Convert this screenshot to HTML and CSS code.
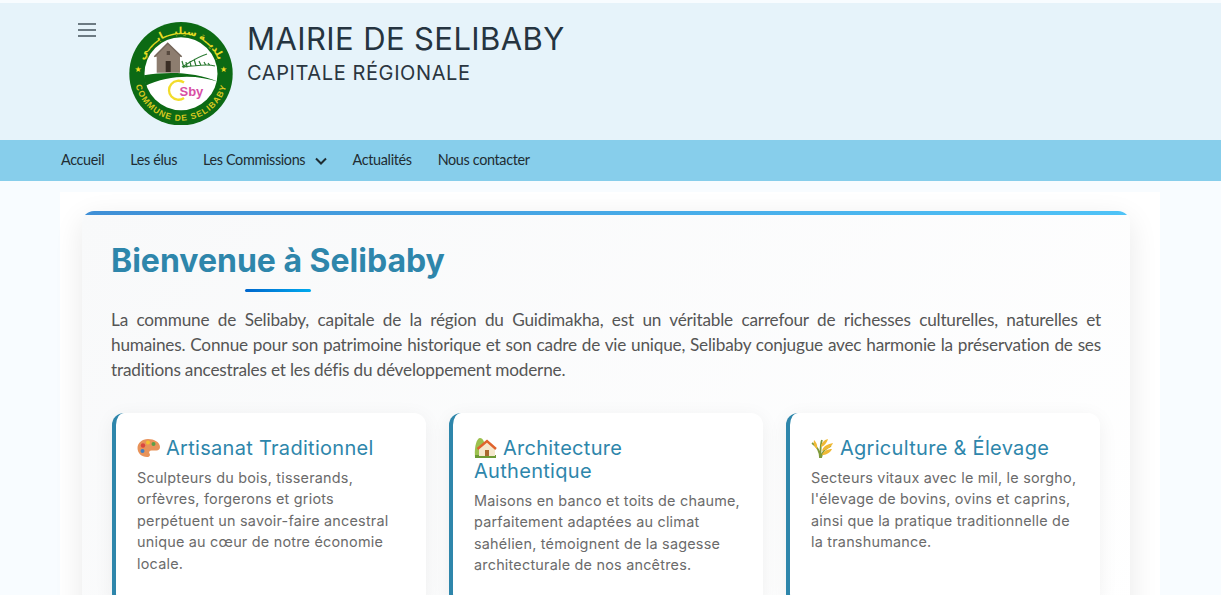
FILE: index.html
```html
<!DOCTYPE html>
<html lang="fr">
<head>
<meta charset="utf-8">
<title>Mairie de Selibaby</title>
<link rel="stylesheet" href="styles.css">
</head>
<body>
<header class="site-header">
  <button class="burger" aria-label="Menu">
    <svg width="18" height="14" viewBox="0 0 18 14"><path d="M0 1h18M0 7h18M0 13h18" stroke="#6c7a82" stroke-width="2" fill="none"/></svg>
  </button>
  <svg class="logo" viewBox="0 0 104 104" width="104" height="104">
    <defs>
      <path id="arcTop" d="M12.500 52.700A39.500 39.500 0 1 1 91.500 52.700"/>
      <path id="arcBottom" d="M5 52.700A47 47 0 0 0 99 52.700"/>
      <clipPath id="inner"><circle cx="52" cy="52.700" r="37"/></clipPath>
    </defs>
    <circle cx="52" cy="52.700" r="51.700" fill="#0c6a14"/>
    <circle cx="52" cy="52.700" r="36.500" fill="#fff"/>
    <path d="M38.700 22.300L25.300 35.700H27.700V51.700H51V35.700H52.700Z" fill="#8d7d6f"/>
    <path d="M25.300 35.700L38.700 22.300L52.700 35.700" fill="none" stroke="#75665a" stroke-width="1.500"/>
    <rect x="36.700" y="40" width="5" height="11" fill="#3a2e25"/>
    <rect x="37.700" y="30" width="3.300" height="4" fill="#574a3f"/>
    <path d="M53 46C60 42 68 36 78 33M55 45.500C64 46 76 42 86 45M53 40L55 47M57 41L58 46.500M61 40L62 45.500M65 38L67 45M70 40L72 44.500M75 41L77 44.500M79 42L81 44.500" fill="none" stroke="#2c7a33" stroke-width="1.200"/>
    <g clip-path="url(#inner)">
      <path d="M14 54.500C40 50 68 51 92 62C72 54 42 52 14 66Z" fill="#0c6a14"/>
    </g>
    <path d="M55 61.500A9.500 9.500 0 1 0 55 77" fill="none" stroke="#f2dc2c" stroke-width="2.300"/>
    <text class="logo-sby" x="50.500" y="74.500">Sby</text>
    <text class="logo-ar"><textPath href="#arcTop" startOffset="50%" text-anchor="middle">بلديــة سيلبـــابــــي</textPath></text>
    <text class="logo-fr"><textPath href="#arcBottom" startOffset="50%" text-anchor="middle">COMMUNE DE SELIBABY</textPath></text>
    <text class="logo-star" x="5.500" y="51">★</text>
    <text class="logo-star" x="91" y="51">★</text>
  </svg>
  <div class="brand">
    <h1>MAIRIE DE SELIBABY</h1>
    <p>CAPITALE RÉGIONALE</p>
  </div>
</header>
<nav class="main-nav">
  <a href="#">Accueil</a>
  <a href="#">Les élus</a>
  <a href="#" class="has-caret">Les Commissions
    <svg width="12" height="8" viewBox="0 0 12 8"><path d="M1 1.500L6 6.500L11 1.500" fill="none" stroke="#1f2d33" stroke-width="2"/></svg>
  </a>
  <a href="#">Actualités</a>
  <a href="#">Nous contacter</a>
</nav>
<main class="container">
  <section class="welcome">
    <h2>Bienvenue à Selibaby</h2>
    <p class="intro">La commune de Selibaby, capitale de la région du Guidimakha, est un véritable carrefour de richesses culturelles, naturelles et humaines. Connue pour son patrimoine historique et son cadre de vie unique, Selibaby conjugue avec harmonie la préservation de ses traditions ancestrales et les défis du développement moderne.</p>
    <div class="features">
      <article class="feature">
        <h3><svg class="emoji" viewBox="0 0 23 20"><path d="M11 1C5 1 .500 5 .500 10s4 9 9.500 9c3 0 3.500-2 2.500-3.500s0-3 2-3h5c2 0 3.500-1.500 3.500-3.500C23 4 17 1 11 1Z" fill="#e8935a"/><circle cx="6" cy="7.500" r="2.200" fill="#d9473f"/><circle cx="11" cy="4.500" r="2" fill="#f2c230"/><circle cx="16.500" cy="6" r="2" fill="#5a9f48"/><circle cx="5.500" cy="13" r="2" fill="#3f7fc4"/></svg> Artisanat Traditionnel</h3>
        <p>Sculpteurs du bois, tisserands, orfèvres, forgerons et griots perpétuent un savoir-faire ancestral unique au cœur de notre économie locale.</p>
      </article>
      <article class="feature">
        <h3><svg class="emoji" viewBox="0 0 23 20"><path d="M1 19C0 8 3 0 6 0s5 5 5 9l-2 10Z" fill="#9cc04e"/><rect x="1" y="17" width="21" height="3" fill="#6d9a35"/><path d="M5 10L13 3L21 10V18H5Z" fill="#f5e7cc"/><path d="M3.500 11L13 3L22 11" fill="none" stroke="#e0632d" stroke-width="2.400"/><rect x="11" y="12" width="4" height="6" fill="#a9682f"/></svg> Architecture Authentique</h3>
        <p>Maisons en banco et toits de chaume, parfaitement adaptées au climat sahélien, témoignent de la sagesse architecturale de nos ancêtres.</p>
      </article>
      <article class="feature">
        <h3><svg class="emoji" viewBox="0 0 23 20"><path d="M9 20C9 14 7 9 1 5M9 20C10 13 9 7 11 2M10 20C11 14 14 10 20 8" fill="none" stroke="#7f9a3a" stroke-width="1.800"/><path d="M6 11C7 7 5 4 3 2C2 6 3 9 6 11ZM10 9C14 8 16 4 17 1C13 2 10 5 10 9ZM11 13C15 12 20 10 22 5C17 6 12 8 11 13ZM11 17C15 17 19 15 21 11C17 11 12 13 11 17Z" fill="#f0b935"/></svg> Agriculture &amp; Élevage</h3>
        <p>Secteurs vitaux avec le mil, le sorgho, l'élevage de bovins, ovins et caprins, ainsi que la pratique traditionnelle de la transhumance.</p>
      </article>
    </div>
  </section>
</main>
</body>
</html>
```
FILE: styles.css
```css
* { box-sizing: border-box; }
html { overflow: hidden; }
body {
  margin: 0;
  padding-top: 3px;
  background: #f8fcff;
  color: #333;
  font-family: "Lato", "Noto Sans", sans-serif;
}
.site-header {
  display: flex;
  align-items: flex-start;
  height: 137px;
  padding: 18px 0 0 78px;
  background: #e6f3fa;
}
.burger {
  width: 18px;
  height: 14px;
  margin: 2px 33px 0 0;
  padding: 0;
  border: 0;
  background: none;
  line-height: 0;
}
.logo { flex: none; margin-right: 14px; }
.logo-ar { font: 700 10px "Noto Sans", "DejaVu Sans", sans-serif; fill: #e8dc22; }
.logo-fr { font: 700 8.500px "Liberation Sans", sans-serif; letter-spacing: 1px; fill: #d8c820; }
.logo-star { font: 8px "DejaVu Sans", sans-serif; fill: #f0dc22; }
.logo-sby { font: 700 13px "Liberation Sans", sans-serif; fill: #d84fa5; }
.brand { margin-top: -1px; }
.brand h1 {
  margin: 0;
  font: 400 31px/38px "Inter", sans-serif;
  letter-spacing: .4px;
  color: #253440;
}
.brand p {
  margin: 3px 0 0;
  font: 400 20px/24px "Inter", sans-serif;
  letter-spacing: .6px;
  color: #2b3640;
}
.main-nav {
  display: flex;
  align-items: center;
  gap: 26px;
  height: 41px;
  padding: 0 0 3px 61px;
  background: #87ceeb;
}
.main-nav a {
  font-size: 14.400px;
  letter-spacing: -.35px;
  color: #1f2d33;
  text-decoration: none;
}
.has-caret svg { margin-left: 6px; }
.container {
  width: 1100px;
  margin: 11px 0 0 60px;
  padding: 19px 30px 0 22px;
  background: #fff;
}
.welcome {
  position: relative;
  padding: 31px 29px 40px 29px;
  border-radius: 12px;
  background: linear-gradient(135deg, #f8f9fa, #fff);
  box-shadow: 0 8px 30px rgba(0, 0, 0, .09);
  overflow: hidden;
}
.welcome::before {
  content: "";
  position: absolute;
  inset: 0 0 auto 0;
  height: 4px;
  background: linear-gradient(90deg, #3f8fd6, #4fc3f7);
}
.welcome h2 {
  position: relative;
  display: inline-block;
  margin: 0 0 15px;
  padding-bottom: 12px;
  font: 700 32px/38px "Inter", sans-serif;
  color: #2e86ab;
}
.welcome h2::after {
  content: "";
  position: absolute;
  left: 134px;
  bottom: 0;
  width: 66px;
  height: 3px;
  border-radius: 2px;
  background: linear-gradient(90deg, #0066cc, #00aaee);
}
.intro {
  margin: 0 0 31px;
  font-size: 17.200px;
  letter-spacing: -.2px;
  line-height: 25px;
  text-align: justify;
  color: #555;
}
.features {
  display: grid;
  grid-template-columns: repeat(3, 314.500px);
  gap: 22.500px;
  margin-left: .5px;
}
.feature {
  padding: 23.500px 22px 30px 21.500px;
  border-left: 4px solid #2e86ab;
  border-radius: 12px;
  background: #fff;
  box-shadow: 0 4px 20px rgba(0, 0, 0, .06);
}
.feature h3 {
  margin: 0 0 7px;
  font: 400 20px/23px "Inter", sans-serif;
  letter-spacing: .3px;
  color: #2e86ab;
}
.emoji { width: 23px; height: 20px; vertical-align: -3px; }
.feature p {
  margin: 0;
  font: 400 14.400px/21.600px "Inter", sans-serif;
  letter-spacing: .22px;
  color: #6b6b6b;
}
```
